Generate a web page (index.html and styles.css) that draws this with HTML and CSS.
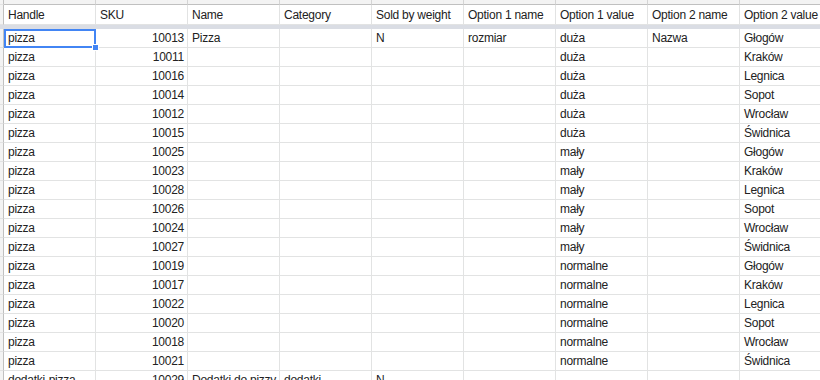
FILE: index.html
```html
<!DOCTYPE html>
<html lang="pl">
<head>
<meta charset="utf-8">
<title>Sheet</title>
<link rel="stylesheet" href="styles.css">
</head>
<body>
<div class="sheet">
  <div class="row top">
    <div class="rh"></div>
    <div class="c"></div><div class="c"></div><div class="c"></div><div class="c"></div><div class="c"></div><div class="c"></div><div class="c"></div><div class="c"></div><div class="c"></div>
  </div>
  <div class="row head">
    <div class="rh"></div>
    <div class="c">Handle</div><div class="c">SKU</div><div class="c">Name</div><div class="c">Category</div><div class="c">Sold by weight</div><div class="c">Option 1 name</div><div class="c">Option 1 value</div><div class="c">Option 2 name</div><div class="c">Option 2 value</div>
  </div>
  <div class="freeze"></div>
  <div class="row"><div class="rh"></div><div class="c sel">pizza</div><div class="c num">10013</div><div class="c">Pizza</div><div class="c"></div><div class="c">N</div><div class="c">rozmiar</div><div class="c">duża</div><div class="c">Nazwa</div><div class="c">Głogów</div></div>
  <div class="row"><div class="rh"></div><div class="c">pizza</div><div class="c num">10011</div><div class="c"></div><div class="c"></div><div class="c"></div><div class="c"></div><div class="c">duża</div><div class="c"></div><div class="c">Kraków</div></div>
  <div class="row"><div class="rh"></div><div class="c">pizza</div><div class="c num">10016</div><div class="c"></div><div class="c"></div><div class="c"></div><div class="c"></div><div class="c">duża</div><div class="c"></div><div class="c">Legnica</div></div>
  <div class="row"><div class="rh"></div><div class="c">pizza</div><div class="c num">10014</div><div class="c"></div><div class="c"></div><div class="c"></div><div class="c"></div><div class="c">duża</div><div class="c"></div><div class="c">Sopot</div></div>
  <div class="row"><div class="rh"></div><div class="c">pizza</div><div class="c num">10012</div><div class="c"></div><div class="c"></div><div class="c"></div><div class="c"></div><div class="c">duża</div><div class="c"></div><div class="c">Wrocław</div></div>
  <div class="row"><div class="rh"></div><div class="c">pizza</div><div class="c num">10015</div><div class="c"></div><div class="c"></div><div class="c"></div><div class="c"></div><div class="c">duża</div><div class="c"></div><div class="c">Świdnica</div></div>
  <div class="row"><div class="rh"></div><div class="c">pizza</div><div class="c num">10025</div><div class="c"></div><div class="c"></div><div class="c"></div><div class="c"></div><div class="c">mały</div><div class="c"></div><div class="c">Głogów</div></div>
  <div class="row"><div class="rh"></div><div class="c">pizza</div><div class="c num">10023</div><div class="c"></div><div class="c"></div><div class="c"></div><div class="c"></div><div class="c">mały</div><div class="c"></div><div class="c">Kraków</div></div>
  <div class="row"><div class="rh"></div><div class="c">pizza</div><div class="c num">10028</div><div class="c"></div><div class="c"></div><div class="c"></div><div class="c"></div><div class="c">mały</div><div class="c"></div><div class="c">Legnica</div></div>
  <div class="row"><div class="rh"></div><div class="c">pizza</div><div class="c num">10026</div><div class="c"></div><div class="c"></div><div class="c"></div><div class="c"></div><div class="c">mały</div><div class="c"></div><div class="c">Sopot</div></div>
  <div class="row"><div class="rh"></div><div class="c">pizza</div><div class="c num">10024</div><div class="c"></div><div class="c"></div><div class="c"></div><div class="c"></div><div class="c">mały</div><div class="c"></div><div class="c">Wrocław</div></div>
  <div class="row"><div class="rh"></div><div class="c">pizza</div><div class="c num">10027</div><div class="c"></div><div class="c"></div><div class="c"></div><div class="c"></div><div class="c">mały</div><div class="c"></div><div class="c">Świdnica</div></div>
  <div class="row"><div class="rh"></div><div class="c">pizza</div><div class="c num">10019</div><div class="c"></div><div class="c"></div><div class="c"></div><div class="c"></div><div class="c">normalne</div><div class="c"></div><div class="c">Głogów</div></div>
  <div class="row"><div class="rh"></div><div class="c">pizza</div><div class="c num">10017</div><div class="c"></div><div class="c"></div><div class="c"></div><div class="c"></div><div class="c">normalne</div><div class="c"></div><div class="c">Kraków</div></div>
  <div class="row"><div class="rh"></div><div class="c">pizza</div><div class="c num">10022</div><div class="c"></div><div class="c"></div><div class="c"></div><div class="c"></div><div class="c">normalne</div><div class="c"></div><div class="c">Legnica</div></div>
  <div class="row"><div class="rh"></div><div class="c">pizza</div><div class="c num">10020</div><div class="c"></div><div class="c"></div><div class="c"></div><div class="c"></div><div class="c">normalne</div><div class="c"></div><div class="c">Sopot</div></div>
  <div class="row"><div class="rh"></div><div class="c">pizza</div><div class="c num">10018</div><div class="c"></div><div class="c"></div><div class="c"></div><div class="c"></div><div class="c">normalne</div><div class="c"></div><div class="c">Wrocław</div></div>
  <div class="row"><div class="rh"></div><div class="c">pizza</div><div class="c num">10021</div><div class="c"></div><div class="c"></div><div class="c"></div><div class="c"></div><div class="c">normalne</div><div class="c"></div><div class="c">Świdnica</div></div>
  <div class="row"><div class="rh"></div><div class="c">dodatki-pizza</div><div class="c num">10029</div><div class="c">Dodatki do pizzy</div><div class="c">dodatki</div><div class="c">N</div><div class="c"></div><div class="c"></div><div class="c"></div><div class="c"></div></div>
</div>
</body>
</html>
```
FILE: styles.css
```css
html, body {
  margin: 0;
  padding: 0;
  background: #fff;
  overflow: hidden;
}
.sheet {
  width: 820px;
  height: 380px;
  overflow: hidden;
  font-family: "Liberation Sans", Arial, sans-serif;
  font-size: 12px;
  letter-spacing: -0.25px;
  color: #222;
}
.row {
  display: flex;
  height: 19px;
}
.rh {
  flex: none;
  width: 4px;
  box-sizing: border-box;
  background: #f3f3f3;
  border-right: 1px solid #c0c0c0;
  border-bottom: 1px solid #e2e2e2;
}
.c {
  flex: none;
  width: 92px;
  box-sizing: border-box;
  border-right: 1px solid #e2e3e3;
  border-bottom: 1px solid #e2e3e3;
  padding: 1px 3px 0 4px;
  line-height: 17px;
  white-space: nowrap;
  overflow: hidden;
  position: relative;
}
.num {
  text-align: right;
}
.top {
  height: 5px;
}
.top .c {
  background: #f3f3f3;
  padding: 0;
  border-right: 1px solid #d4d4d4;
  border-bottom: 1px solid #c0c0c0;
}
.head {
  height: 20px;
}
.head .c {
  line-height: 18px;
  padding-top: 1px;
}
.freeze {
  height: 4px;
  background: #dadde4;
}
.sel {
  overflow: visible;
}
.sel::before {
  content: "";
  position: absolute;
  left: 0;
  top: 0;
  right: -1px;
  bottom: -1px;
  border: 2px solid #4285f4;
  pointer-events: none;
}
.sel::after {
  content: "";
  position: absolute;
  right: -4px;
  bottom: -4px;
  width: 5px;
  height: 5px;
  background: #4285f4;
  border: 1px solid #fff;
  z-index: 2;
}
```
